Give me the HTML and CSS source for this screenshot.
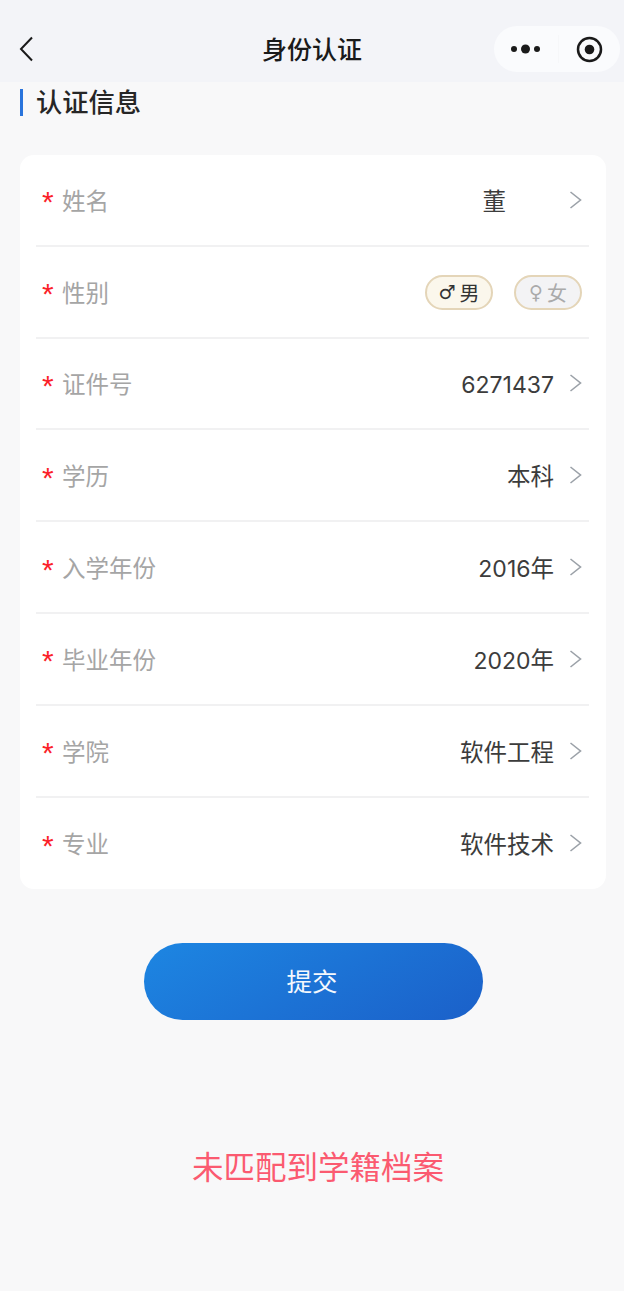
FILE: index.html
```html
<!DOCTYPE html>
<html lang="zh">
<head>
<meta charset="utf-8">
<title>身份认证</title>
<link rel="stylesheet" href="styles.css">
</head>
<body>
<header class="navbar">
  <svg class="back" width="16" height="28" viewBox="0 0 16 28"><path d="M13 2.500 2 14 13 25.500" fill="none" stroke="#1a1a1a" stroke-width="2"/></svg>
  <h1 class="nav-title">身份认证</h1>
  <div class="capsule">
    <svg class="dots" width="29" height="12" viewBox="0 0 29 12"><circle cx="3" cy="6" r="3" fill="#1a1a1a"/><circle cx="14.500" cy="6" r="4.500" fill="#1a1a1a"/><circle cx="26" cy="6" r="3" fill="#1a1a1a"/></svg>
    <span class="capsule-line"></span>
    <svg class="ring" width="27" height="27" viewBox="0 0 27 27"><circle cx="13.500" cy="13.500" r="11.500" fill="none" stroke="#1a1a1a" stroke-width="2.500"/><circle cx="13.500" cy="13.500" r="4.800" fill="#1a1a1a"/></svg>
  </div>
</header>
<main class="content">
  <h2 class="section-title">认证信息</h2>
  <section class="card">
    <div class="row"><span class="star">*</span><span class="label">姓名</span><span class="value name-value">董</span><svg class="arrow" width="13" height="18" viewBox="0 0 13 18"><path d="M1.500 1 11.500 9 1.500 17" fill="none" stroke="#9ba1a8" stroke-width="1.600"/></svg></div>
    <div class="row"><span class="star">*</span><span class="label">性别</span>
      <div class="genders">
        <span class="gender on"><span class="g-sym">♂</span>男</span>
        <span class="gender off"><span class="g-sym">♀</span>女</span>
      </div>
    </div>
    <div class="row"><span class="star">*</span><span class="label">证件号</span><span class="value"><span class="num">6271437</span></span><svg class="arrow" width="13" height="18" viewBox="0 0 13 18"><path d="M1.500 1 11.500 9 1.500 17" fill="none" stroke="#9ba1a8" stroke-width="1.600"/></svg></div>
    <div class="row"><span class="star">*</span><span class="label">学历</span><span class="value">本科</span><svg class="arrow" width="13" height="18" viewBox="0 0 13 18"><path d="M1.500 1 11.500 9 1.500 17" fill="none" stroke="#9ba1a8" stroke-width="1.600"/></svg></div>
    <div class="row"><span class="star">*</span><span class="label">入学年份</span><span class="value"><span class="num">2016</span>年</span><svg class="arrow" width="13" height="18" viewBox="0 0 13 18"><path d="M1.500 1 11.500 9 1.500 17" fill="none" stroke="#9ba1a8" stroke-width="1.600"/></svg></div>
    <div class="row"><span class="star">*</span><span class="label">毕业年份</span><span class="value"><span class="num">2020</span>年</span><svg class="arrow" width="13" height="18" viewBox="0 0 13 18"><path d="M1.500 1 11.500 9 1.500 17" fill="none" stroke="#9ba1a8" stroke-width="1.600"/></svg></div>
    <div class="row"><span class="star">*</span><span class="label">学院</span><span class="value">软件工程</span><svg class="arrow" width="13" height="18" viewBox="0 0 13 18"><path d="M1.500 1 11.500 9 1.500 17" fill="none" stroke="#9ba1a8" stroke-width="1.600"/></svg></div>
    <div class="row"><span class="star">*</span><span class="label">专业</span><span class="value">软件技术</span><svg class="arrow" width="13" height="18" viewBox="0 0 13 18"><path d="M1.500 1 11.500 9 1.500 17" fill="none" stroke="#9ba1a8" stroke-width="1.600"/></svg></div>
  </section>
  <button class="submit" type="button">提交</button>
  <p class="error">未匹配到学籍档案</p>
</main>
</body>
</html>
```
FILE: styles.css
```css
* { box-sizing: border-box; }
html, body { margin: 0; padding: 0; }
body {
  width: 624px;
  height: 1291px;
  overflow: hidden;
  background: #f8f8f9;
  font-family: "Noto Sans CJK SC", "Noto Sans", "Liberation Sans", sans-serif;
  color: #333;
}
.navbar {
  height: 82px;
  background: #f3f4f8;
  display: flex;
  align-items: center;
  padding: 16px 4px 0 19px;
  position: relative;
}
.nav-title {
  margin: 0;
  position: absolute;
  left: 0;
  right: 0;
  top: 30px;
  text-align: center;
  font-size: 25px;
  line-height: 36px;
  font-weight: 500;
  color: #1a1a1a;
}
.back { flex: none; }
.capsule {
  margin-left: auto;
  width: 126px;
  height: 46px;
  border-radius: 23px;
  background: #fafbfd;
  display: flex;
  align-items: center;
  padding-left: 17px;
}
.dots { flex: none; }
.capsule-line { width: 1px; height: 28px; background: #f6f7f9; margin: 0 17px 0 18px; }
.ring { flex: none; }
.content { padding: 0 18px 0 20px; }
.section-title {
  margin: 7px 0 0;
  height: 27px;
  border-left: 3px solid #2a74dc;
  padding-left: 13px;
  font-size: 26.250px;
  line-height: 25px;
  font-weight: 500;
  color: #262626;
}
.card {
  margin-top: 39px;
  background: #fff;
  border-radius: 14px;
  padding: 0 17px 0 16px;
}
.row {
  height: 91.800px;
  display: flex;
  align-items: center;
  border-bottom: 2px solid #f1f1f2;
}
.row:last-child { border-bottom: 0; }
.star {
  margin-left: 6px;
  width: 20px;
  color: #fb1f2a;
  font-family: "Liberation Sans", sans-serif;
  font-size: 30px;
  line-height: 20px;
  padding-top: 5px;
}
.label { font-size: 23.500px; color: #a5a5a5; }
.value { margin-left: auto; font-size: 23.500px; color: #3c3c3c; }
.num { font-family: "Inter", sans-serif; font-size: 23px; }
.name-value { margin-right: 48px; }
.arrow { flex: none; margin: 0 7px 0 15px; }
.genders { margin-left: auto; margin-right: 7px; display: flex; gap: 21px; padding-top: 2px; }
.gender {
  width: 68px;
  height: 35px;
  border: 2px solid #e4d5b8;
  border-radius: 18px;
  display: flex;
  align-items: center;
  justify-content: center;
  font-size: 20px;
  line-height: 1;
}
.g-sym { font-family: "DejaVu Sans", sans-serif; font-size: 19px; margin-right: 4px; }
.on { background: #fbf7ec; color: #333; }
.off { background: #f3f3f5; color: #aaa; }
.submit {
  display: block;
  width: 339px;
  height: 77px;
  margin: 54px 0 0 124px;
  border: 0;
  border-radius: 39px;
  background: linear-gradient(150deg, #1d86e2, #1b60c9);
  color: #f4f8fd;
  font-family: inherit;
  font-size: 25.500px;
  line-height: 34px;
  padding: 0 3px 4px 0;
}
.error {
  margin: 122px 0 0 10px;
  text-align: center;
  font-size: 31.500px;
  line-height: 46px;
  color: #fb5a70;
}
```
